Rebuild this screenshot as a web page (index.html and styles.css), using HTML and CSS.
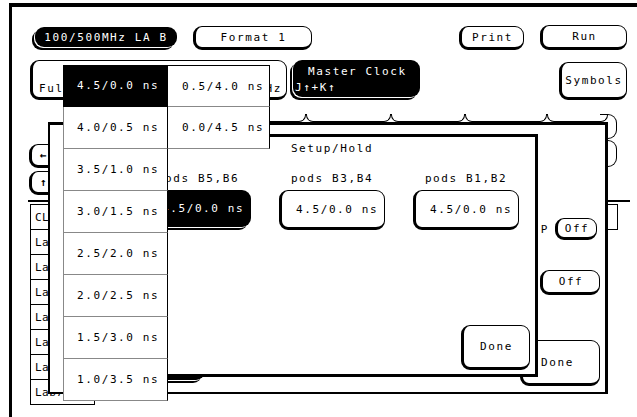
FILE: index.html
```html
<!DOCTYPE html>
<html lang="en">
<head>
    <meta charset="UTF-8" />
    <title>Format 1 - Setup/Hold</title>
    <link rel="stylesheet" href="styles.css">
</head>
<body>
<div class="screen">
    <div class="frame">
        <div class="row top">
            <div class="btn dark la">100/500MHz LA B</div>
            <div class="btn fmt">Format 1</div>
            <div class="btn print">Print</div>
            <div class="btn run">Run</div>
        </div>
        <div class="row second">
            <div class="btn mode"><span>Full Channel</span><span>100MHz</span></div>
            <div class="btn dark clock">
                <span class="l1">Master Clock</span>
                <span class="l2">J↑+K↑</span>
            </div>
            <div class="btn symbols">Symbols</div>
        </div>
        <div class="mid">
            <div class="scroll">
                <div class="btn arrow">←</div>
                <div class="btn arrow">↑</div>
            </div>
            <div class="tabs">
                <div class="tab t1"></div>
                <div class="tab t2"></div>
                <div class="tab t3"></div>
                <div class="tab t4"></div>
                <div class="tab t5"></div>
            </div>
            <div class="side-tabs">
                <div class="side"></div>
                <div class="side"></div>
            </div>
        </div>
        <div class="rule"></div>
        <div class="labels">
            <div class="label-col">
                <div class="cell">CLK</div>
                <div class="cell">Lab1</div>
                <div class="cell">Lab2</div>
                <div class="cell">Lab3</div>
                <div class="cell">Lab4</div>
                <div class="cell">Lab5</div>
                <div class="cell">Lab6</div>
                <div class="cell">Lab7</div>
            </div>
            <div class="cell right"></div>
        </div>
    </div>

    <!-- pod clock window -->
    <div class="window">
        <div class="win-main">
            <div class="btn dark stub"></div>
        </div>
        <div class="win-side">
            <div class="p-row"><span>P</span><div class="btn off">Off</div></div>
            <div class="btn off2">Off</div>
            <div class="btn win-done">Done</div>
        </div>
    </div>

    <!-- setup/hold dialog -->
    <div class="dialog">
        <div class="title">Setup/Hold</div>
        <div class="pods">
            <div class="pod">
                <div class="pod-label">pods B5,B6</div>
                <div class="btn dark value dv">4.5/0.0 ns</div>
            </div>
            <div class="pod">
                <div class="pod-label">pods B3,B4</div>
                <div class="btn value">4.5/0.0 ns</div>
            </div>
            <div class="pod">
                <div class="pod-label">pods B1,B2</div>
                <div class="btn value">4.5/0.0 ns</div>
            </div>
        </div>
        <div class="btn dlg-done">Done</div>
    </div>

    <!-- value list -->
    <div class="popup">
        <div class="opt sel">4.5/0.0 ns</div>
        <div class="opt">4.0/0.5 ns</div>
        <div class="opt">3.5/1.0 ns</div>
        <div class="opt">3.0/1.5 ns</div>
        <div class="opt">2.5/2.0 ns</div>
        <div class="opt">2.0/2.5 ns</div>
        <div class="opt">1.5/3.0 ns</div>
        <div class="opt">1.0/3.5 ns</div>
        <div class="opt r first">0.5/4.0 ns</div>
        <div class="opt r">0.0/4.5 ns</div>
    </div>
</div>
</body>
</html>
```

FILE: styles.css
```css
* {
    box-sizing: border-box;
}
body {
    margin: 0;
    background: #fff;
    color: #000;
    font-family: "DejaVu Sans Mono", monospace;
    font-size: 11px;
    letter-spacing: 1.6px;
}
.screen {
    position: relative;
    width: 637px;
    height: 417px;
    overflow: hidden;
}
.frame {
    margin: 3px 0 0 9px;
    height: 414px;
    border-top: 4px solid #000;
    border-left: 3px solid #000;
}

/* buttons */
.btn {
    display: flex;
    align-items: center;
    justify-content: center;
    border: 1px solid #000;
    border-left-width: 3px;
    border-bottom-width: 3px;
    border-radius: 9px;
    background: #fff;
    white-space: nowrap;
}
.dark {
    border: none;
    background: #000;
    color: #fff;
    box-shadow: -1px 1px 0 #fff, -3px 3px 0 #000;
}

/* top rows */
.row {
    display: flex;
    align-items: flex-end;
}
.top {
    height: 43px;
    padding: 0 10px 0 20px;
}
.la {
    width: 142px;
    height: 20px;
    margin: 0 0 3px 3px;
}
.fmt {
    width: 119px;
    height: 24px;
    margin-left: 16px;
}
.print {
    width: 65px;
    height: 24px;
    margin-left: auto;
}
.run {
    width: 87px;
    height: 25px;
    margin-left: 16px;
}
.second {
    height: 40px;
    margin-top: 10px;
    padding: 0 10px 0 18px;
}
.mode {
    width: 257px;
    height: 40px;
    justify-content: space-between;
    align-items: flex-end;
    padding: 0 4px 2px 6px;
}
.clock {
    width: 127px;
    height: 37px;
    margin: 0 0 3px 6px;
    flex-direction: column;
    align-items: flex-start;
    padding-top: 3px;
    line-height: 16px;
}
.clock .l1 {
    padding-left: 15px;
}
.clock .l2 {
    padding-left: 2px;
}
.symbols {
    width: 68px;
    height: 38px;
    margin-left: auto;
}

/* middle band, mostly hidden */
.mid {
    display: flex;
    align-items: flex-start;
    height: 81px;
    margin-top: 14px;
    padding-right: 20px;
}
.scroll {
    display: flex;
    flex-direction: column;
    gap: 3px;
    margin: 30px 0 0 17px;
}
.arrow {
    width: 40px;
    height: 24px;
    justify-content: flex-start;
    padding-left: 8px;
    font-weight: bold;
}
.tabs {
    display: flex;
    margin-left: auto;
}
.tab {
    height: 8px;
    border: 1px solid #000;
    border-top: none;
    border-radius: 0 0 7px 7px;
}
.t1 { width: 80px; }
.t2 { width: 85px; }
.t3 { width: 74px; }
.t4 { width: 82px; }
.t5 { width: 61px; }
.side-tabs {
    width: 17px;
    margin-left: -8px;
}
.side {
    height: 25px;
    border: 1px solid #000;
    border-left: none;
    border-radius: 0 9px 9px 0;
}
.side + .side {
    margin-top: 1px;
    height: 27px;
}
.rule {
    height: 2px;
    margin: 5px 7px 0 16px;
    background: #000;
}
.labels {
    display: flex;
    align-items: flex-start;
    margin-top: 2px;
    padding-right: 19px;
}
.label-col {
    width: 65px;
    margin-left: 18px;
}
.cell {
    display: flex;
    align-items: center;
    height: 26px;
    padding-left: 4px;
    border: 1px solid #000;
    letter-spacing: 0.5px;
}
.cell + .cell {
    margin-top: -1px;
}
.right {
    width: 58px;
    margin-left: auto;
}

/* pod window */
.window {
    position: absolute;
    left: 48px;
    top: 122px;
    width: 560px;
    height: 272px;
    display: flex;
    border: 2px solid #000;
    border-top-width: 3px;
    border-right-width: 3px;
    background: #fff;
}
.win-main {
    flex: 1;
    display: flex;
    align-items: flex-end;
    padding: 0 0 12px 60px;
}
.stub {
    width: 95px;
    height: 30px;
}
.win-side {
    width: 85px;
    display: flex;
    flex-direction: column;
    align-items: flex-end;
    padding: 93px 5px 0 0;
}
.p-row {
    display: flex;
    align-items: center;
    gap: 6px;
    margin-right: 3px;
}
.off {
    width: 42px;
    height: 22px;
}
.off2 {
    width: 60px;
    height: 25px;
    margin-top: 30px;
}
.win-done {
    width: 80px;
    height: 46px;
    margin-top: 45px;
    justify-content: flex-start;
    padding-left: 18px;
}

/* setup/hold dialog */
.dialog {
    position: absolute;
    left: 126px;
    top: 134px;
    width: 412px;
    height: 243px;
    display: flex;
    flex-direction: column;
    border: 3px solid #000;
    background: #fff;
}
.title {
    margin-top: 5px;
    line-height: 14px;
    text-align: center;
}
.pods {
    display: grid;
    grid-template-columns: repeat(3, 106px);
    column-gap: 28px;
    justify-content: center;
    margin-top: 16px;
}
.pod-label {
    line-height: 14px;
    text-align: center;
}
.value {
    height: 40px;
    margin-top: 4px;
    justify-content: flex-start;
    padding-left: 14px;
}
.dv {
    width: 103px;
    height: 37px;
    margin-left: 3px;
}
.dlg-done {
    align-self: flex-end;
    width: 69px;
    height: 45px;
    margin: auto 5px 4px 0;
}

/* value list */
.popup {
    position: absolute;
    left: 63px;
    top: 65px;
    display: grid;
    grid-template-columns: 105px 102px;
    grid-template-rows: repeat(8, 42px);
    grid-auto-flow: column;
}
.opt {
    display: flex;
    align-items: center;
    padding-left: 13px;
    background: #fff;
    border-bottom: 1px solid #888;
    border-left: 1px solid #888;
    border-right: 1px solid #000;
}
.opt.r {
    border-left: none;
    padding-left: 14px;
}
.opt.first {
    border-top: 1px solid #000;
}
.sel {
    background: #000;
    color: #fff;
    border-color: #000;
}
```
